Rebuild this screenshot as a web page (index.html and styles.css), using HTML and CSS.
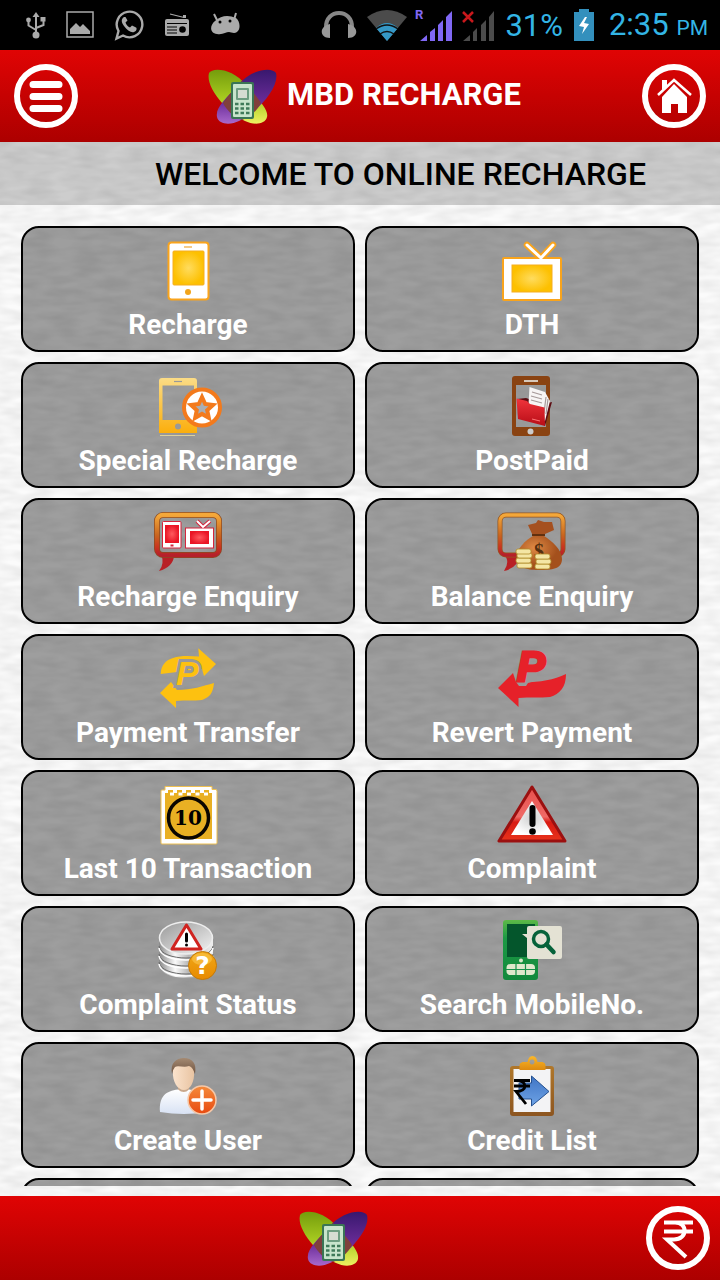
FILE: index.html
```html
<!DOCTYPE html>
<html lang="en">
<head>
<meta charset="utf-8">
<meta name="viewport" content="width=device-width, initial-scale=1">
<title>MBD Recharge</title>
<link rel="stylesheet" href="styles.css">
</head>
<body class="app">

<svg class="defs" width="0" height="0" aria-hidden="true">
  <defs>
    <radialGradient id="gold"><stop offset="0" stop-color="#ffdc5e"/><stop offset="1" stop-color="#fdc000"/></radialGradient>
    <radialGradient id="redGlow"><stop offset="0" stop-color="#ff5a5f"/><stop offset="1" stop-color="#ea1525"/></radialGradient>
    <linearGradient id="goldFall" x2="0" y2="1"><stop offset="0" stop-color="#fbdc86"/><stop offset="1" stop-color="#fbae0c"/></linearGradient>
    <linearGradient id="bubble" x2="0" y2="1"><stop offset="0" stop-color="#f4a83a"/><stop offset=".5" stop-color="#c9661f"/><stop offset=".8" stop-color="#c9351f"/><stop offset="1" stop-color="#b5202a"/></linearGradient>
    <linearGradient id="folder" x2="0" y2="1"><stop offset="0" stop-color="#f0343c"/><stop offset="1" stop-color="#b80d16"/></linearGradient>
    <radialGradient id="bag" cx=".4" cy=".35"><stop offset="0" stop-color="#df8a45"/><stop offset="1" stop-color="#a4501c"/></radialGradient>
    <linearGradient id="warn" x2="0" y2="1"><stop offset="0" stop-color="#e8504c"/><stop offset=".55" stop-color="#ef6a66"/><stop offset=".65" stop-color="#d81a12"/><stop offset="1" stop-color="#e8331c"/></linearGradient>
    <radialGradient id="warnIn"><stop offset="0" stop-color="#cfcfcf"/><stop offset="1" stop-color="#fff"/></radialGradient>
    <linearGradient id="metal"><stop offset="0" stop-color="#888"/><stop offset=".3" stop-color="#fafafa"/><stop offset=".55" stop-color="#b5b5b5"/><stop offset="1" stop-color="#eee"/></linearGradient>
    <linearGradient id="metalTop" x2="1" y2="1"><stop offset="0" stop-color="#999"/><stop offset="1" stop-color="#f4f4f4"/></linearGradient>
    <linearGradient id="amber" x2="0" y2="1"><stop offset="0" stop-color="#f0a818"/><stop offset="1" stop-color="#e88a00"/></linearGradient>
    <linearGradient id="green" x2="0" y2="1"><stop offset="0" stop-color="#5cb947"/><stop offset=".3" stop-color="#1c9a45"/><stop offset="1" stop-color="#12893c"/></linearGradient>
    <linearGradient id="hair" x2="0" y2="1"><stop offset="0" stop-color="#a58a72"/><stop offset="1" stop-color="#6d5240"/></linearGradient>
    <linearGradient id="skin"><stop offset="0" stop-color="#fbe3cd"/><stop offset="1" stop-color="#e9c4a2"/></linearGradient>
    <linearGradient id="shirt" x2="0" y2="1"><stop offset="0" stop-color="#fff"/><stop offset="1" stop-color="#d8e2f4"/></linearGradient>
    <linearGradient id="orange" x2="0" y2="1"><stop offset="0" stop-color="#f58a3a"/><stop offset="1" stop-color="#e84a10"/></linearGradient>
    <linearGradient id="blue" x2="0" y2="1"><stop offset="0" stop-color="#3f74c4"/><stop offset="1" stop-color="#6ea3e6"/></linearGradient>
    <linearGradient id="board" x2="0" y2="1"><stop offset="0" stop-color="#b0772a"/><stop offset="1" stop-color="#8c5520"/></linearGradient>
    <linearGradient id="clip" x2="0" y2="1"><stop offset="0" stop-color="#fbb829"/><stop offset="1" stop-color="#dd8a10"/></linearGradient>
    <linearGradient id="wingG" x2="0" y2="1"><stop offset="0" stop-color="#749c0c"/><stop offset=".55" stop-color="#a8cc20"/><stop offset="1" stop-color="#eef060"/></linearGradient>
    <linearGradient id="wingP" x2="0" y2="1"><stop offset="0" stop-color="#38186e"/><stop offset=".6" stop-color="#6a2c98"/><stop offset="1" stop-color="#a868cc"/></linearGradient>
    <symbol id="logo" viewBox="0 0 80 62">
      <path d="M10 8C13 2 34 3 47 20C58 33 70 44 68 52C66 60 54 60 46 56C30 49 6 23 10 8Z" fill="url(#wingG)"/>
      <path d="M77 8C74 2 53 3 39 20C28 33 16 42 18 52C20 60 32 60 40 56C56 49 81 23 77 8Z" fill="url(#wingP)"/>
      <path d="M43 16C51 23 58 32 62 38C57 47 51 52 43 55C35 52 28 46 24 38C29 31 36 22 43 16Z" fill="#80403c"/>
      <rect x="32" y="17" width="23" height="37" rx="2" fill="#3a7555"/>
      <rect x="34" y="19" width="19" height="33" rx="1" fill="#c8e4cc"/>
      <rect x="37" y="23" width="13" height="12" rx="1" fill="#6d9c80"/>
      <rect x="39" y="25" width="9" height="8" fill="#d6dcd2"/>
      <path d="M36 39h15M36 43.500h15M36 48h15" stroke="#3f7a59" stroke-width="2.500" stroke-dasharray="3.500 2"/>
    </symbol>
  </defs>
</svg>

<div class="status">
  <div class="status-group status-left">
    <svg width="20" height="28" viewBox="0 0 20 28" fill="none" stroke="#aaa" stroke-width="2"><path d="M10 24V4M2.500 10v4.500L10 19M17.500 9v5L10 17"/><path d="M6.500 6L10 1l3.500 5z" fill="#aaa" stroke="none"/><circle cx="10" cy="24" r="3.500" fill="#aaa" stroke="none"/><circle cx="2.500" cy="9" r="2.400" fill="#aaa" stroke="none"/><rect x="14.500" y="6" width="5" height="4.500" fill="#aaa" stroke="none"/></svg>
    <svg width="28" height="28" viewBox="0 0 28 28"><rect x="1" y="1" width="26" height="25" fill="none" stroke="#aaa" stroke-width="1.500"/><path d="M4 23v-5l6-6 4 4 3-3 7 7v3z" fill="#aaa"/></svg>
    <svg width="30" height="32" viewBox="0 0 30 32"><path d="M2.500 29.500L4.500 22A12.800 12.800 0 1 1 9 26.500z" fill="none" stroke="#aaa" stroke-width="2.400"/><path d="M10 8c-3 2-3 5 0 9s7 7 10 6c3-1 3-4 2-4.500l-4-2-2 2c-2-.500-4-3-4.500-5l2-2-2-3.500z" fill="#aaa"/></svg>
    <svg width="26" height="26" viewBox="0 0 26 26"><path d="M6 2l14 3.500" stroke="#aaa" stroke-width="1.200"/><path d="M19 3h3v3h-3z" fill="#aaa"/><rect x="1" y="7" width="24" height="17" rx="2" fill="#aaa"/><path d="M3 11.500h20M3 15h10M3 18h10M3 21h10" stroke="#000" stroke-width="1.200"/><circle cx="18.500" cy="17.500" r="3.300" fill="#000"/></svg>
    <svg width="30" height="26" viewBox="0 0 30 26"><path d="M4 2l3 6M26 1l-2 7" stroke="#aaa" stroke-width="2"/><path d="M5 9Q14 1 26 6C30 9 31 17 27 20C24 22 21 20 19 20C16 20 13 23 7 22C-1 21 0 13 5 9Z" fill="#aaa"/><circle cx="10" cy="10" r="1.500" fill="#000"/><circle cx="20" cy="9" r="1.500" fill="#000"/></svg>
  </div>
  <div class="status-group status-right">
    <svg width="36" height="30" viewBox="0 0 36 30"><path d="M5 18C4-2 32-2 31 18" fill="none" stroke="#888" stroke-width="4"/><path d="M9 14v14C-2 28-2 16 9 14ZM27 14v14C38 28 38 16 27 14Z" fill="#999"/></svg>
    <svg width="40" height="32" viewBox="0 0 40 32"><path d="M0 8Q20-6 40 8L20 32Z" fill="#4b4b4b"/><path d="M9 19Q20 9 31 19L20 32Z" fill="#3598c6"/><path d="M9 20q11-8 22 0M13 25q7-5 14 0" fill="none" stroke="#111" stroke-width="1.300"/></svg>
    <svg class="signal" width="38" height="34" viewBox="0 0 38 34"><text x="0" y="11" class="roaming">R</text><path d="M5 33l7-6v6zM15 24l5-4v13h-5zM23 17l5-5v21h-5zM31 9l6-6v30h-6z" fill="#8068f5"/></svg>
    <svg class="signal" width="34" height="34" viewBox="0 0 34 34"><path d="M2 4l10 10M12 4L2 14" stroke="#c8181c" stroke-width="2.500"/><path d="M2 33l7-6v6zM12 24l4-4v13h-4zM20 17l5-5v21h-5zM28 9l5-6v30h-5z" fill="#4b4b4b"/></svg>
    <span class="status-text">31%</span>
    <svg width="22" height="32" viewBox="0 0 22 32"><path d="M1 3h5V0h10v3h5v29H1z" fill="#3390bd"/><path d="M12 8L6 17l5 1-2 7 7-10-5-1 3-6z" fill="#fff"/></svg>
    <span class="status-text clock">2:35 <small class="ampm">PM</small></span>
  </div>
</div>

<header class="bar">
  <button class="round" type="button" aria-label="Menu">
    <svg width="64" height="64" viewBox="0 0 64 64" fill="none" stroke="#fff"><circle cx="32" cy="32" r="29" stroke-width="6"/><path d="M19 20.500h26M19 32.500h26M19 44.500h26" stroke-width="7" stroke-linecap="round"/></svg>
  </button>
  <div class="brand">
    <svg class="logo" width="80" height="62" aria-hidden="true"><use href="#logo"/></svg>
    <h1 class="title">MBD RECHARGE</h1>
  </div>
  <button class="round" type="button" aria-label="Home">
    <svg width="64" height="64" viewBox="0 0 64 64" fill="none" stroke="#fff"><circle cx="32" cy="32" r="29" stroke-width="6"/><path d="M16 31L32 16l17 15" stroke-width="2.500"/><path d="M20 16h5v6l-5 4z" fill="#fff" stroke="none"/><path d="M20 33l12-13 13 13v16h-9v-9h-7v9h-9z" fill="#fff" stroke="none"/></svg>
  </button>
</header>

<p class="welcome">WELCOME TO ONLINE RECHARGE</p>

<main class="menu">
  <button class="tile" type="button">
    <svg class="icon" viewBox="0 0 80 64"><rect x="20.500" y="3.500" width="40" height="57" rx="3" fill="#fff" stroke="#f9a41c" stroke-width="2"/><rect x="25" y="12" width="31" height="34" rx="1" fill="url(#gold)" stroke="#f5ae20"/><path d="M36 8h8" stroke="#f0b860" stroke-width="1.500"/><circle cx="40" cy="53" r="3" fill="#f2a51c"/></svg>
    <span class="label">Recharge</span>
  </button>
  <button class="tile" type="button">
    <svg class="icon" viewBox="0 0 80 64"><g fill="none" stroke-linecap="round"><path d="M35 6l14 13L61 6" stroke="#f9a41c" stroke-width="6.500"/><rect x="11" y="19" width="58" height="42" rx="1" fill="#fff" stroke="#f9a41c" stroke-width="2"/><path d="M35 6l14 13L61 6" stroke="#fff" stroke-width="3"/></g><rect x="20" y="26" width="40" height="27" fill="url(#gold)" stroke="#f5ae20"/></svg>
    <span class="label">DTH</span>
  </button>
  <button class="tile" type="button">
    <svg class="icon" viewBox="0 0 80 64"><path fill-rule="evenodd" d="M14 3h32q3 0 3 3v52H11V6q0-3 3-3zM14.500 10.500v34.500h31.500V10.500z" fill="url(#goldFall)"/><path d="M26 6.500h8" stroke="#999" stroke-width="1.200"/><circle cx="30" cy="51.500" r="3" fill="#999"/><path d="M12 60.500h35" stroke="#ddd09c"/><circle cx="54" cy="32.500" r="18" fill="#fff" stroke="#f37a1c" stroke-width="4"/><path d="M54 22l3.200 7 7.800.900-5.800 5.300 1.600 7.600-6.800-3.900-6.800 3.900 1.600-7.600-5.800-5.300 7.800-.900z" fill="#a9aeb4" stroke="#f37a1c" stroke-width="4"/></svg>
    <span class="label">Special Recharge</span>
  </button>
  <button class="tile" type="button">
    <svg class="icon" viewBox="0 0 80 64"><path fill-rule="evenodd" d="M23 1h32q3 0 3 3v54q0 3-3 3H23q-3 0-3-3V4q0-3 3-3zM24 10v42h30V10z" fill="#8a4312"/><path d="M32 6h14" stroke="#d8c8b8" stroke-width="2"/><circle cx="38.500" cy="56.500" r="3" fill="#ccc"/><path d="M25 24l9-1 18 6 8-2-7 24z" fill="#5d0c12"/><path d="M37.500 12L53 17l5 9-5 20-17-8z" fill="#f7f5f5"/><path d="M40 17l10 3M39 21l11 3M39 25l11 3M54 22l-2 16M56 24l-2 15" stroke="#a69a9a" stroke-width="1.200"/><path d="M24.500 23.500L35 26l3 3 14.500 3.500L53 51l-27-7z" fill="url(#folder)"/><path d="M40 44l8 2" stroke="#f77"/></svg>
    <span class="label">PostPaid</span>
  </button>
  <button class="tile" type="button">
    <svg class="icon" viewBox="0 0 80 64"><path d="M13 43q4 10-2 17q14-4 15-15z" fill="#b82025"/><rect x="9" y="4" width="62" height="40" rx="6" fill="none" stroke="#8a4a22" stroke-width="6"/><rect x="9" y="4" width="62" height="40" rx="6" fill="none" stroke="url(#bubble)" stroke-width="4.500"/><rect x="14.500" y="10.500" width="18.500" height="26.500" rx="1" fill="#fff" stroke="#d5253c"/><rect x="17" y="14" width="14" height="18" fill="url(#redGlow)"/><rect x="22.500" y="33.500" width="3" height="2" fill="#d5253c"/><path d="M49 10l6 6 7-6" fill="none" stroke="#d5253c" stroke-width="4"/><rect x="37.500" y="17" width="28" height="20" fill="#fff" stroke="#d5253c"/><path d="M49 10l6 6 7-6" fill="none" stroke="#fff" stroke-width="2"/><rect x="42" y="20" width="19" height="13" fill="url(#redGlow)"/></svg>
    <span class="label">Recharge Enquiry</span>
  </button>
  <button class="tile" type="button">
    <svg class="icon" viewBox="0 0 80 64"><path d="M11 42q8 8 1 18q14-3 16-16z" fill="#b82025"/><rect x="8" y="4" width="63" height="40" rx="6" fill="none" stroke="#96561f" stroke-width="5"/><rect x="8" y="4" width="63" height="40" rx="6" fill="none" stroke="url(#bubble)" stroke-width="3.500"/><path d="M41 25L36 14l8-2 2-3 6 2 8 0 2 8-9 4-3 3z" fill="#a5501f"/><path d="M41 25h11c8 5 18 14 18 23 0 10-10 11-23 11S24 56 24 47c0-9 10-18 17-22z" fill="url(#bag)"/><path d="M40 24h13" stroke="#61300f" stroke-width="2"/><text x="47" y="47" class="dollar">$</text><g fill="#f4e6a4" stroke="#b08a28" stroke-width=".800"><rect x="25" y="52" width="15" height="5" rx="2"/><rect x="24" y="47" width="15" height="5" rx="2"/><rect x="25" y="42" width="15" height="5" rx="2"/><rect x="24" y="38" width="15" height="5" rx="2"/><rect x="43" y="53" width="15" height="5" rx="2"/><rect x="44" y="48" width="15" height="5" rx="2"/><rect x="43" y="43" width="15" height="5" rx="2"/></g></svg>
    <span class="label">Balance Enquiry</span>
  </button>
  <button class="tile" type="button">
    <svg class="icon" viewBox="0 0 80 64" fill="#fdc110"><path d="M12.700 27C13 18 18 13 25 11C33 8 43 9 51 9.500L50.300 1.300L68 17L56 29L54 22Z"/><path d="M12 46L23 35L29 43C44 43 55 39 66 36C65 46 62 50 54 53C46 54 38 53 28 54V61Z"/><text x="28" y="38" class="pay pay-gold">P</text></svg>
    <span class="label">Payment Transfer</span>
  </button>
  <button class="tile" type="button">
    <svg class="icon" viewBox="0 0 80 64" fill="#e62129"><path d="M6 41L21 26L24 35C42 36 60 34 74 27C74 40 68 47 58 50C48 51 38 50 26.500 51V60Z"/><path d="M24 35L29 15H45V33L36 36L34 39H27Z" fill="#999"/><text x="25" y="34" class="pay pay-red">P</text></svg>
    <span class="label">Revert Payment</span>
  </button>
  <button class="tile" type="button">
    <svg class="icon" viewBox="0 0 80 64"><path d="M17 3.500h47v3h4q1 0 1 2V60q0 1-1 1H14q-1 0-1-1V8q0-1 1-1h3z" fill="#fff" stroke="#efc050"/><path d="M17 10h47v46H17z" fill="#e9b023"/><path d="M20 8.500h42" stroke="#e9b023" stroke-width="3" stroke-dasharray="5 4"/><path d="M22 11h38" stroke="#fff" stroke-width="3" stroke-dasharray="4 4.500"/><circle cx="40.500" cy="35" r="20" fill="none" stroke="#0a0600" stroke-width="3.500"/><text x="40" y="42" class="ten">10</text></svg>
    <span class="label">Last 10 Transaction</span>
  </button>
  <button class="tile" type="button">
    <svg class="icon" viewBox="0 0 80 64"><path d="M40 4L7 58h66z" fill="url(#warn)" stroke="#9b1010" stroke-width="3" stroke-linejoin="round"/><path d="M40 18L19 52h42z" fill="url(#warnIn)"/><path d="M40.500 25v16" stroke="#000" stroke-width="6" stroke-linecap="round"/><circle cx="40.500" cy="48.500" r="3.300"/></svg>
    <span class="label">Complaint</span>
  </button>
  <button class="tile" type="button">
    <svg class="icon" viewBox="0 0 80 64"><path d="M11 20v26c0 17 54 17 54 0V20z" fill="url(#metal)"/><path d="M11 27c2 16 52 16 54 0M11 35c2 16 52 16 54 0M11 43c2 16 52 16 54 0" fill="none" stroke="#6c6c6c"/><path d="M11 29c2 16 52 16 54 0M11 37c2 16 52 16 54 0M11 45c2 16 52 16 54 0" fill="none" stroke="#fff" stroke-width="1.500"/><ellipse cx="38" cy="19" rx="26.500" ry="16" fill="url(#metalTop)" stroke="#eee" stroke-width="1.500"/><path d="M38.500 6L24 30h29z" fill="#fff" stroke="#d02420" stroke-width="3" stroke-linejoin="round"/><path d="M38.500 15v7" stroke="#000" stroke-width="3" stroke-linecap="round"/><circle cx="38.500" cy="26" r="1.500"/><circle cx="54.500" cy="46.500" r="14" fill="url(#amber)" stroke="#c47a0a"/><ellipse cx="54" cy="40" rx="10" ry="6" fill="#ffcf5c" opacity=".5"/><text x="54.500" y="55" class="ask">?</text></svg>
    <span class="label">Complaint Status</span>
  </button>
  <button class="tile" type="button">
    <svg class="icon" viewBox="0 0 80 64"><rect x="11" y="1" width="35" height="60" rx="3" fill="url(#green)"/><path d="M15 5h28v33H15z" fill="#04562c"/><path d="M37 7h31q2 0 2 2v29q0 2-2 2H37q-2 0-2-2V19l-5-4 5 0V9q0-2 2-2z" fill="#e4e2d4"/><circle cx="49" cy="20" r="7.500" fill="none" stroke="#06623a" stroke-width="3.500"/><path d="M54.500 25.500l7 7.500" stroke="#06623a" stroke-width="4.500" stroke-linecap="round"/><circle cx="29" cy="41.500" r="2" fill="#d8e8c8"/><rect x="14.500" y="45" width="28.500" height="11" rx="4" fill="#dfe8cc"/><path d="M24 45v11M33.500 45v11M14 50.500h29" stroke="#17914a" stroke-width="1.200"/></svg>
    <span class="label">Search MobileNo.</span>
  </button>
  <button class="tile" type="button">
    <svg class="icon" viewBox="0 0 80 64"><path d="M30 28h11v10H30z" fill="#c9a88c"/><path d="M12 57C11 41 18 36 30 34.500q6 5 11 0C53 36 60 44 59 57Q36 61 12 57Z" fill="url(#shirt)"/><path d="M25 16C25 4 46 4 46 16C47 27 42 35 36 35S24 27 25 16Z" fill="url(#skin)"/><path d="M24 19C22 8 28 3 36 3S49 8 47 19C45 14 44 12 41 11C36 13 30 10 27 12Q25 14 24 19Z" fill="url(#hair)"/><circle cx="54" cy="45" r="14" fill="url(#orange)" stroke="#f5c8a8" stroke-width="1.500"/><path d="M54 36v18M45 45h18" stroke="#fff" stroke-width="3.500" stroke-linecap="round"/></svg>
    <span class="label">Create User</span>
  </button>
  <button class="tile" type="button">
    <svg class="icon" viewBox="0 0 80 64"><rect x="18" y="11" width="44" height="50" rx="3" fill="url(#board)"/><path d="M21.500 14h37v43h-37z" fill="#f3f3f5"/><path fill-rule="evenodd" d="M27.500 15V10q0-2 3-3h5q1-6 5-6t5 6h5q3 1 3 3v5zM40 4.500a2.500 2.500 0 1 0 .100 0z" fill="url(#clip)"/><path d="M27 28h12.500v-7L57 36.500 39.500 51v-7H27z" fill="url(#blue)" stroke="#24508f"/><path d="M22 25.500h16M22 31h16M24 25.500c12 0 12 11 0 11L34 49" fill="none" stroke="#000" stroke-width="2.800"/></svg>
    <span class="label">Credit List</span>
  </button>
  <button class="tile" type="button"></button>
  <button class="tile" type="button"></button>
</main>

<footer class="bar foot">
  <div class="foot-brand"><svg class="logo" width="80" height="62" aria-hidden="true"><use href="#logo"/></svg></div>
  <button class="round" type="button" aria-label="Balance">
    <svg width="64" height="64" viewBox="0 0 64 64" fill="none" stroke="#fff"><circle cx="32" cy="32" r="29" stroke-width="6"/><path d="M18 16.500h29M18 25.500h29M20 16.500h9c13 0 13 17-1 17h-7L40 51" stroke-width="4"/></svg>
  </button>
</footer>

</body>
</html>
```
FILE: styles.css
```css
* { box-sizing: border-box; }

.app {
  margin: 0;
  height: 100vh;
  display: flex;
  flex-direction: column;
  overflow: hidden;
  font-family: Roboto, "Liberation Sans", sans-serif;
  background-color: #fbfbfb;
  background-image: url("data:image/svg+xml,%3Csvg xmlns='http://www.w3.org/2000/svg' width='256' height='256'%3E%3Cfilter id='p' x='0' y='0' width='100%25' height='100%25'%3E%3CfeTurbulence type='fractalNoise' baseFrequency='.04 .12' numOctaves='2' seed='4' stitchTiles='stitch'/%3E%3CfeColorMatrix values='0 0 0 0 0 0 0 0 0 0 0 0 0 0 0 .12 0 0 0 -.03'/%3E%3C/filter%3E%3Crect width='256' height='256' filter='url(%23p)'/%3E%3C/svg%3E");
}

.defs { position: absolute; }

.status {
  flex: none;
  height: 50px;
  padding: 0 12px 0 26px;
  display: flex;
  align-items: center;
  justify-content: space-between;
  background: #000;
}

.status-group { display: flex; align-items: center; }
.status-left { gap: 20px; }
.status-right { gap: 10px; }
.signal { margin-left: -2px; }
.status-text { padding-top: 2px; color: #33b5e5; font-size: 31px; line-height: 48px; }
.clock { margin-left: 4px; white-space: nowrap; }
.ampm { font-size: 21px; }
.roaming { font: bold 13px Roboto, sans-serif; fill: #8068f5; }

.bar {
  flex: none;
  display: flex;
  align-items: center;
  justify-content: space-between;
  padding: 14px;
  background: linear-gradient(#e00404, #ac0000);
}

.round {
  flex: none;
  padding: 0;
  border: 0;
  background: none;
  line-height: 0;
}

.brand { display: flex; align-items: center; gap: 8px; }
.logo { display: block; }

.title {
  margin: 0;
  padding-bottom: 2px;
  font-size: 31px;
  line-height: 40px;
  font-weight: 700;
  color: #fff;
  white-space: nowrap;
}

.welcome {
  flex: none;
  margin: 0;
  padding: 12px 0 11px 155px;
  font-size: 32px;
  line-height: 40px;
  font-weight: 500;
  color: #000;
  white-space: nowrap;
  background: rgba(0, 0, 0, .18);
}

.menu {
  flex: 1;
  min-height: 0;
  margin-bottom: 10px;
  padding: 21px;
  display: grid;
  grid-template-columns: 1fr 1fr;
  grid-auto-rows: 126px;
  gap: 10px;
  overflow-y: auto;
  scrollbar-width: none;
}

.tile {
  display: flex;
  flex-direction: column;
  align-items: center;
  gap: 6px;
  padding: 11px 8px 0;
  border: 2px solid #000;
  border-radius: 18px;
  background: rgba(0, 0, 0, .37);
  color: #fff;
  font: 700 28px/32px Roboto, "Liberation Sans", sans-serif;
}

.icon { width: 80px; height: 64px; flex: none; overflow: visible; }
.label { white-space: nowrap; }

.foot { padding: 10px 10px 10px 14px; }
.foot-brand { flex: 1; display: flex; justify-content: center; }

.dollar { font: bold 20px "Liberation Serif", serif; fill: #55300f; text-anchor: middle; }
.ten { font: bold 20px "DejaVu Serif", serif; text-anchor: middle; }
.ask { font: bold 25px "DejaVu Sans", sans-serif; fill: #fff; text-anchor: middle; }
.pay { font: italic bold 34px "Liberation Sans", sans-serif; paint-order: stroke; stroke: #999; stroke-width: 6px; }
.pay-red { font-size: 42px; stroke: #e62129; stroke-width: 3px; }
```
